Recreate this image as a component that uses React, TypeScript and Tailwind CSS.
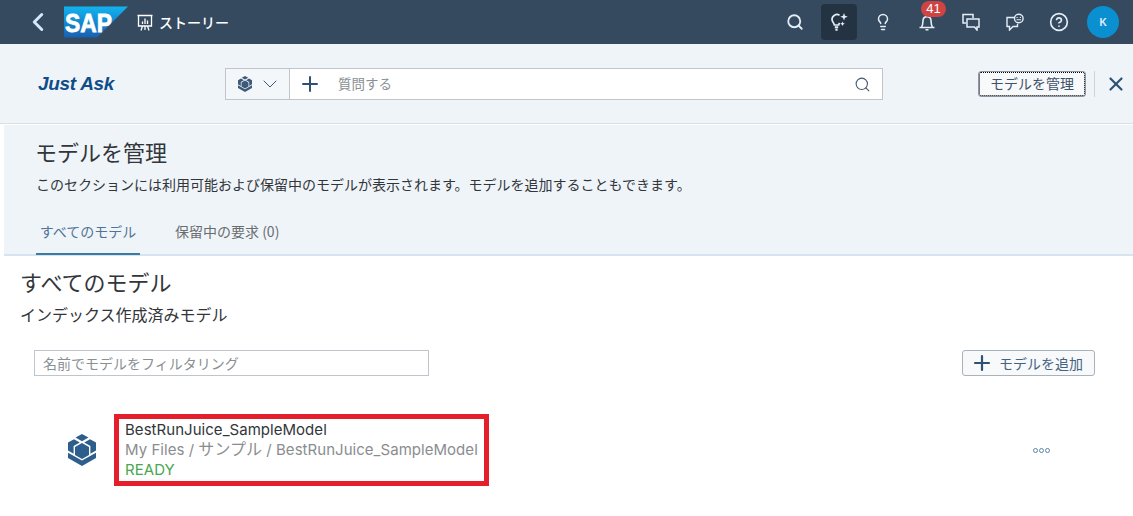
import { ChevronDown, ChevronLeft, CircleHelp, Lightbulb, Plus, Search, X } from 'lucide-react';

const jp = 'font-["Noto_Sans_CJK_JP","Liberation_Sans",sans-serif]';

function ModelIcon({ className }: { className?: string }) {
  return (
    <svg aria-hidden="true" viewBox="0 0 28 32" fill="currentColor" className={className}>
      <path d="M14 0 20.500 3.600 14 7.200 7.500 3.600Z" />
      <path d="M0 8.500 6 5.200 11.800 8.400 5.600 12V19.800L0 16.500Z" />
      <path d="M28 8.500 22 5.200 16.200 8.400 22.400 12V19.800L28 16.500Z" />
      <path d="M14 9 21 13V21L14 25 7 21V13Z" />
      <path d="M0 18.700 14 26.600 28 18.700V24L14 32 0 24Z" />
    </svg>
  );
}

function StoryIcon() {
  return (
    <svg aria-hidden="true" viewBox="0 0 16 17" fill="none" stroke="currentColor" strokeWidth="1.300" className="h-[17px] w-4">
      <path d="M0.500 1.500h15M1.500 1.500v10.500h13V1.500M5.500 12 4 16.500M10.500 12l1.500 4.500M8 12v4" />
      <path d="M5.500 10V7.500M8 10V4.500M10.500 10V6.500" />
    </svg>
  );
}

function SapLogo() {
  return (
    <svg viewBox="0 0 64 32" className="h-8 w-16">
      <defs>
        <linearGradient id="sapBlue" x1="0" y1="0" x2="0" y2="1">
          <stop offset="0" stopColor="#10b4f0" />
          <stop offset="1" stopColor="#1a5fb0" />
        </linearGradient>
      </defs>
      <path d="M0 0.500h64L33 31.500H0Z" fill="url(#sapBlue)" />
      <text
        x="1"
        y="26"
        fontFamily="Liberation Sans"
        fontWeight="700"
        fontSize="26"
        fill="#fff"
        stroke="#fff"
        strokeWidth="0.800"
        textLength="47"
        lengthAdjust="spacingAndGlyphs"
      >
        SAP
      </text>
    </svg>
  );
}

function SparkBulb() {
  return (
    <svg aria-hidden="true" viewBox="0 0 20 20" fill="none" stroke="currentColor" strokeWidth="1.700" className="h-5 w-5">
      <path d="M10.500 3.200A5 5 0 0 0 3 7.500c0 2.200 2 3.300 2.300 5.500h4.400c.1-.8.400-1.500.8-2.200" />
      <path d="M5.800 15.300h3.400M6.400 17.700h2.200" strokeWidth="2" />
      <path d="M15 1l1 2.800 2.800 1-2.800 1-1 2.800-1-2.800-2.800-1 2.800-1ZM13.500 9.500l.7 1.600 1.600.7-1.600.7-.7 1.600-.7-1.600-1.600-.7 1.600-.7Z" fill="currentColor" stroke="none" />
    </svg>
  );
}

function Bell() {
  return (
    <svg aria-hidden="true" viewBox="0 0 18 18" fill="none" stroke="currentColor" strokeWidth="1.600" className="h-[18px] w-[18px]">
      <path d="M1.500 14.500h15M3.500 14.500c1.400-2 1.300-4.500 1.500-7C5.200 5 7 3.600 9 3.600S12.800 5 13 7.500c.2 2.500.1 5 1.500 7M7.500 16.800h3" />
    </svg>
  );
}

function Chats() {
  return (
    <svg aria-hidden="true" viewBox="0 0 18 18" fill="none" stroke="currentColor" strokeWidth="1.500" className="h-[18px] w-[18px]">
      <path d="M11 5V1.500H1v8.500h3" />
      <path d="M5 6h12v8h-2v3l-2.500-3H5Z" />
    </svg>
  );
}

function Feedback() {
  return (
    <svg aria-hidden="true" viewBox="0 0 18 18" fill="none" stroke="currentColor" strokeWidth="1.400" className="h-[18px] w-[18px]">
      <path d="M8.500 4.500H1v9h2.500V17l3.500-3.500h4.500V11" />
      <circle cx="12.800" cy="5.500" r="4.300" />
      <path d="M10.500 4.500h1.200M13.800 4.500H15M10.500 6.800h4.600" strokeWidth="1.100" />
    </svg>
  );
}

export default function App() {
  return (
    <div className={`flex h-[516px] w-[1133px] flex-col overflow-hidden bg-white ${jp}`}>
      <header className="flex h-11 shrink-0 items-center bg-[#354a5f] text-white">
        <ChevronLeft className="ml-[23px] h-[30px] w-[30px] text-[#d1e8ff]" strokeWidth={2.400} />
        <div className="ml-[11px]"><SapLogo /></div>
        <div className="ml-[9px] text-white"><StoryIcon /></div>
        <span className="ml-[6px] text-sm font-medium">ストーリー</span>
        <div className="ml-auto flex items-center pr-[14px] text-[#e5eef7]">
          <Search className="mr-[17px] h-[18px] w-[18px]" strokeWidth={2.400} />
          <div className="flex h-9 w-9 items-center justify-center rounded-sm bg-[#233342]"><SparkBulb /></div>
          <Lightbulb className="ml-[17px] h-[18px] w-[18px]" strokeWidth={2} />
          <div className="relative ml-[26px]">
            <Bell />
            <span className="absolute -top-[12px] left-[3px] flex h-[16px] w-[25px] items-center justify-center rounded-full bg-[#d04343] font-['Liberation_Sans'] text-[13px] text-white">41</span>
          </div>
          <div className="ml-[26px]"><Chats /></div>
          <div className="ml-[26px]"><Feedback /></div>
          <CircleHelp className="ml-[25px] h-[20px] w-[20px]" strokeWidth={2} />
          <div className="ml-[18px] flex h-8 w-8 items-center justify-center rounded-full bg-[#0a8fd0] font-['Liberation_Sans'] text-[10px] font-bold">K</div>
        </div>
      </header>

      <div className="flex h-[80px] shrink-0 items-center border-b border-[#d9dfe5] bg-[#eff4f9]">
        <span className="ml-[38px] mt-[2px] w-[187px] shrink-0 font-['Liberation_Sans'] text-[19px] font-bold italic tracking-[-0.3px] text-[#0f4d8a]">Just Ask</span>
        <div className="flex h-8 w-[658px] shrink-0 border border-[#bfc5cb] bg-white">
          <div className="flex w-16 items-center gap-[6px] border-r border-[#bfc5cb] bg-[#f4f7fa] pl-3 text-[#3d5a78]">
            <ModelIcon className="h-4 w-[14px]" />
            <ChevronDown className="h-6 w-6" strokeWidth={1} />
          </div>
          <Plus className="ml-2 mt-[3px] h-6 w-6 text-[#2f5272]" strokeWidth={2} />
          <span className="ml-4 self-center text-[13.500px] text-[#8a8f94]">質問する</span>
          <Search className="ml-auto mr-[11px] mt-[7px] h-[17px] w-[17px] text-[#44586c]" strokeWidth={1.500} />
        </div>
        <button className="ml-[95px] flex h-[26px] w-[108px] shrink-0 items-center justify-center rounded-[3px] border border-[#8c97a3] bg-[#f7f9fb] text-[14px] text-[#3e5268] outline-1 -outline-offset-2 outline-dotted outline-black">
          モデルを管理
        </button>
        <div className="ml-[8px] h-[26px] w-px bg-[#ccd3da]" />
        <X className="ml-[10px] h-[22px] w-[22px] shrink-0 text-[#2f5272]" strokeWidth={2.400} />
      </div>

      <main className="flex min-h-0 flex-1 flex-col pl-1">
        <section className="mt-[1px] h-[131px] shrink-0 border-b-2 border-[#d5e4f0] bg-[#eff4f9]">
          <h1 className="mt-[11px] pl-[31px] text-[22px] leading-[30px] font-normal text-[#32363a]">モデルを管理</h1>
          <p className="mt-[8px] pl-[32px] text-[14px] leading-5 text-[#32363a]">このセクションには利用可能および保留中のモデルが表示されます。モデルを追加することもできます。</p>
          <div className="mt-[19px] flex pl-[32px] text-[14px]">
            <div className="-mb-[1px] flex h-[42px] w-[104px] items-start justify-center border-b-2 border-[#3d7a9f] pt-[8px] text-[#4f7497]">すべてのモデル</div>
            <div className="ml-[35px] pt-[8px] text-[#6a6d70]">保留中の要求 (0)</div>
          </div>
        </section>

        <section className="flex-1">
          <h2 className="mt-[9px] pl-[16px] text-[22px] leading-[32px] font-normal text-[#32363a]">すべてのモデル</h2>
          <p className="mt-[6px] pl-[16px] text-[16px] leading-[22px] text-[#32363a]">インデックス作成済みモデル</p>
          <div className="mt-[25px] flex items-center justify-between pr-[38px] pl-[30px]">
            <div className="flex h-[26px] w-[395px] items-center border border-[#bfc5cb] bg-white pl-2 text-[14px] text-[#8a8f94]">名前でモデルをフィルタリング</div>
            <button className="flex h-[26px] w-[133px] items-center gap-[5px] rounded-[3px] border border-[#a9b1ba] bg-[#f7f9fb] pl-[7px] text-[14px] text-[#456380]">
              <Plus className="h-6 w-6 shrink-0 text-[#2f5272]" strokeWidth={2.200} />
              モデルを追加
            </button>
          </div>
          <div className="mt-[38px] flex items-center pr-[83px] pl-[64px]">
            <ModelIcon className="h-8 w-7 text-[#2e5f8c]" />
            <div className="ml-[18px] flex h-[72px] w-[375px] flex-col justify-center border-[5px] border-[#e41e2b] pl-[6px] font-['Inter','Noto_Sans_CJK_JP',sans-serif] text-[15px] leading-5 tracking-[0.04px]">
              <span className="text-[#32363a]">BestRunJuice_SampleModel</span>
              <span className="h-5 whitespace-nowrap text-[#8a8d90]">My Files / <span className="text-[16px] leading-none">サンプル</span> / BestRunJuice_SampleModel</span>
              <span className="text-[#4ba64f]">READY</span>
            </div>
            <div className="ml-auto flex gap-[1px]">
              <span className="h-[5px] w-[5px] rounded-full border border-[#5d84a8]" />
              <span className="h-[5px] w-[5px] rounded-full border border-[#5d84a8]" />
              <span className="h-[5px] w-[5px] rounded-full border border-[#5d84a8]" />
            </div>
          </div>
        </section>
      </main>
    </div>
  );
}
